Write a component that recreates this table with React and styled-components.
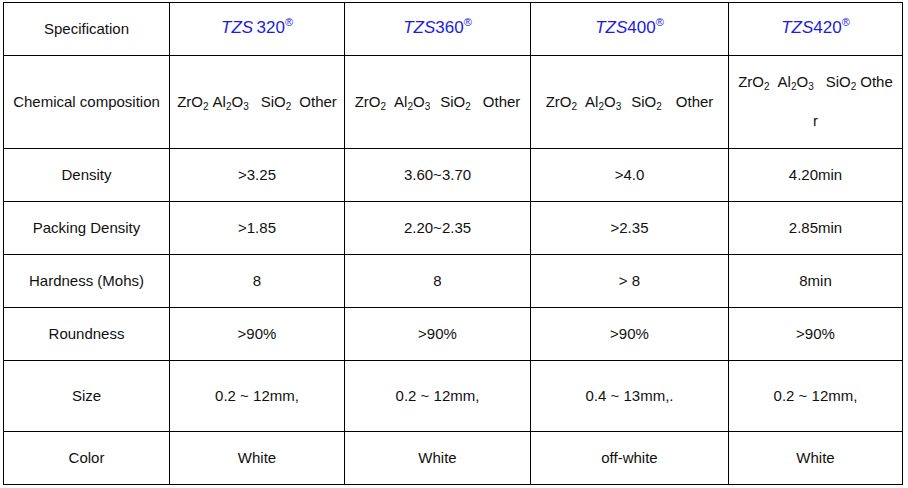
import React from "react";
import styled, { createGlobalStyle } from "styled-components";

const GlobalStyle = createGlobalStyle`
  body {
    margin: 0;
    background: #fff;
    font-family: "Liberation Sans", Arial, sans-serif;
  }
`;

const Page = styled.div`
  padding: 2px 0 0 3px;
`;

const Table = styled.table`
  border-collapse: collapse;
  table-layout: fixed;
  width: 899px;
  color: #111;
  font-size: 15px;
`;

const Row = styled.tr`
  height: ${({ h }) => h}px;
`;

const Cell = styled.td`
  border: 1px solid #000;
  padding: 0 6px 2px;
  text-align: center;
  vertical-align: middle;
  white-space: nowrap;
  line-height: ${({ lh }) => lh || "normal"};
`;

const Model = styled.span`
  color: #1c1ce0;
  font-size: 17px;
`;

const Brand = styled.i`
  font-style: italic;
`;

const Mark = styled.sup`
  font-size: 11px;
  vertical-align: 7px;
  line-height: 0;
`;

const Sub = styled.sub`
  font-size: 10px;
  vertical-align: -3px;
  line-height: 0;
`;

const Gap = styled.span`
  display: inline-block;
  width: ${({ w }) => w}px;
`;

const widths = [166, 175, 186, 198, 174];

const models = [
  { name: "320", space: true },
  { name: "360" },
  { name: "400" },
  { name: "420" },
];

const Formula = ({ gaps, split }) => (
  <>
    ZrO<Sub>2</Sub>
    <Gap w={gaps[0]} />
    Al<Sub>2</Sub>O<Sub>3</Sub>
    <Gap w={gaps[1]} />
    SiO<Sub>2</Sub>
    <Gap w={gaps[2]} />
    {split ? (
      <>
        Othe
        <br />r
      </>
    ) : (
      "Other"
    )}
  </>
);

const rows = [
  { label: "Density", h: 53, values: [">3.25", "3.60~3.70", ">4.0", "4.20min"] },
  { label: "Packing Density", h: 53, values: [">1.85", "2.20~2.35", ">2.35", "2.85min"] },
  { label: "Hardness (Mohs)", h: 53, values: ["8", "8", "> 8", "8min"] },
  { label: "Roundness", h: 53, values: [">90%", ">90%", ">90%", ">90%"] },
  { label: "Size", h: 71, values: ["0.2 ~ 12mm,", "0.2 ~ 12mm,", "0.4 ~ 13mm,.", "0.2 ~ 12mm,"] },
  { label: "Color", h: 53, values: ["White", "White", "off-white", "White"] },
];

export default function App() {
  return (
    <Page>
      <GlobalStyle />
      <Table>
        <colgroup>
          {widths.map((w, i) => (
            <col key={i} style={{ width: w }} />
          ))}
        </colgroup>
        <tbody>
          <Row h={53}>
            <Cell>Specification</Cell>
            {models.map((m) => (
              <Cell key={m.name}>
                <Model>
                  <Brand>TZS</Brand>
                  {m.space ? "\u2009" : ""}
                  {m.name}
                  <Mark>®</Mark>
                </Model>
              </Cell>
            ))}
          </Row>
          <Row h={93}>
            <Cell>Chemical composition</Cell>
            <Cell>
              <Formula gaps={[4, 12, 8]} />
            </Cell>
            <Cell>
              <Formula gaps={[8, 10, 12]} />
            </Cell>
            <Cell>
              <Formula gaps={[8, 10, 14]} />
            </Cell>
            <Cell lh="39px">
              <Formula gaps={[8, 12, 4]} split />
            </Cell>
          </Row>
          {rows.map((r) => (
            <Row key={r.label} h={r.h}>
              <Cell>{r.label}</Cell>
              {r.values.map((v, i) => (
                <Cell key={i}>{v}</Cell>
              ))}
            </Row>
          ))}
        </tbody>
      </Table>
    </Page>
  );
}
